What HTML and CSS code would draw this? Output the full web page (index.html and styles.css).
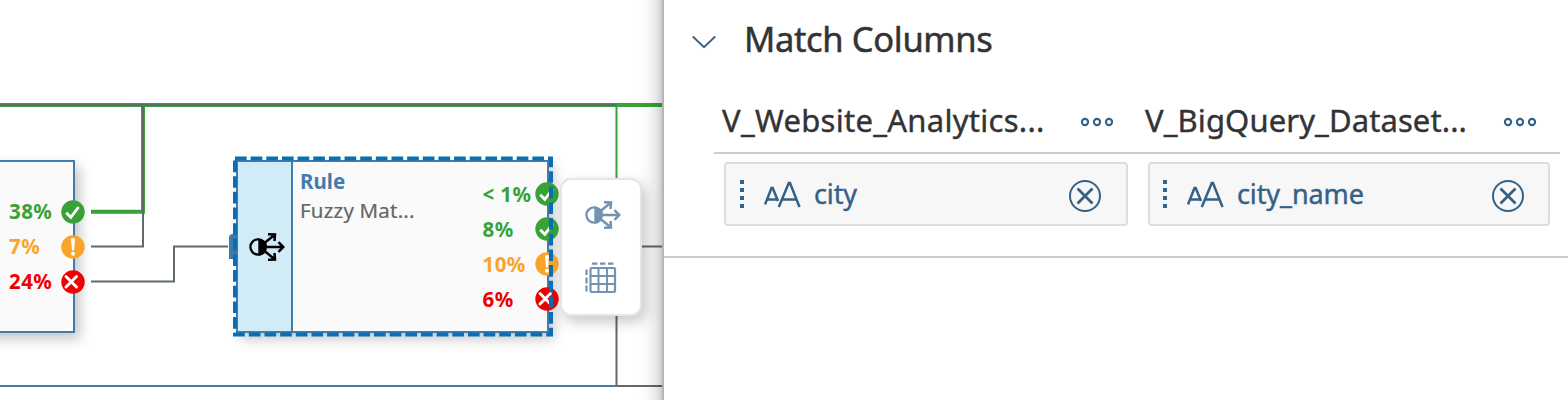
FILE: index.html
```html
<!DOCTYPE html>
<html lang="en">
<head>
<meta charset="utf-8">
<title>Match Columns</title>
<link rel="stylesheet" href="styles.css">
</head>
<body>
<svg class="defs" width="0" height="0" aria-hidden="true">
  <symbol id="ok" viewBox="0 0 24 24"><circle cx="12" cy="12" r="11.7" fill="#38a238"/><path d="M5.2 12.8 9.8 17.3 17.6 7" fill="none" stroke="#fff" stroke-width="2.8"/></symbol>
  <symbol id="warn" viewBox="0 0 24 24"><circle cx="12" cy="12" r="11.7" fill="#faa42b"/><path d="M10 4.2Q10 3 12 3t2 1.2L13 15.6h-2z" fill="#fff"/><circle cx="12" cy="18.7" r="2" fill="#fff"/></symbol>
  <symbol id="err" viewBox="0 0 24 24"><circle cx="12" cy="12" r="11.7" fill="#ee0000"/><path d="M5 6.500 15.500 17M15.500 6.500 5 17" fill="none" stroke="#fff" stroke-width="2.900" stroke-linecap="round"/></symbol>
  <symbol id="match" viewBox="0 0 36 30"><circle cx="9" cy="15" r="7.600" fill="none" stroke="currentColor" stroke-width="2.300"/><path d="M9.300 6.300a8.700 8.700 0 0 1 0 17.400z" fill="currentColor"/><path d="M16 15H34M29.500 10.200 34.300 15l-4.800 4.800M15.500 11 26 2.500M19 2.300 26 2.500 25.500 9M15.500 19 26 27.500M19 27.700 26 27.500 25.500 21" fill="none" stroke="currentColor" stroke-width="2.500"/></symbol>
  <symbol id="grid" viewBox="0 0 32 32"><rect x="5.500" y="6" width="24.500" height="24" rx="1.200" fill="none" stroke="currentColor" stroke-width="2.200"/><path d="M13.500 6v24M22 6v24M6 14h24M6 22h24" stroke="currentColor" stroke-width="2"/><path d="M7 1.700h5.500M15 1.700h5.500M23 1.700h5.500M1.500 7.500v5.500M1.500 15.500v6M1.500 23.500v6" stroke="currentColor" stroke-width="2.200"/></symbol>
  <symbol id="close" viewBox="0 0 32 32"><circle cx="16" cy="16" r="15" fill="none" stroke="currentColor" stroke-width="2"/><path d="M8.500 8.500 23.500 23.500M23.500 8.500 8.500 23.500" stroke="currentColor" stroke-width="2.800"/></symbol>
  <symbol id="more" viewBox="0 0 34 10"><g fill="none" stroke="currentColor" stroke-width="2.100"><circle cx="5" cy="5" r="3.100"/><circle cx="17" cy="5" r="3.100"/><circle cx="29" cy="5" r="3.100"/></g></symbol>
  <symbol id="text" viewBox="0 0 37 27"><g fill="none" stroke="currentColor" stroke-width="2.500"><path d="M1 23.500 7.500 7h1.200L14 20M4 18.500h9"/><path d="M14.800 26 24.800 2h1.200L35.500 26M18.500 18.500h14"/></g></symbol>
  <symbol id="grip" viewBox="0 0 4 28"><path d="M0 0h4v4H0zM0 8h4v4H0zM0 16h4v4H0zM0 24h4v4H0z" fill="currentColor"/></symbol>
</svg>
<div class="app">
  <section class="canvas">
    <svg class="wires" width="664" height="400">
      <g fill="none" stroke-width="2">
        <path class="blue" d="M0 386H616"/>
        <path class="green thick" d="M0 105H662M91 211.700H143V105"/>
        <path class="grey" d="M0 105H616M91 246.500H143V105M91 281.500H174V246.500H228"/>
        <path class="green" d="M616.500 107V180"/>
        <path class="grey" d="M616.500 310V386H662M636 246.500H662"/>
      </g>
    </svg>
    <div class="node node-left">
      <ul class="ports">
        <li class="ok"><span>38%</span><svg><use href="#ok"/></svg></li>
        <li class="warn"><span>7%</span><svg><use href="#warn"/></svg></li>
        <li class="err"><span>24%</span><svg><use href="#err"/></svg></li>
      </ul>
    </div>
    <div class="inport"></div>
    <div class="node node-rule">
      <div class="strip"><svg class="match"><use href="#match"/></svg></div>
      <div class="info"><div class="kind">Rule</div><div class="name">Fuzzy Mat...</div></div>
      <ul class="ports">
        <li class="ok"><span>&lt; 1%</span><svg><use href="#ok"/></svg></li>
        <li class="ok"><span>8%</span><svg><use href="#ok"/></svg></li>
        <li class="warn"><span>10%</span><svg><use href="#warn"/></svg></li>
        <li class="err"><span>6%</span><svg><use href="#err"/></svg></li>
      </ul>
    </div>
    <svg class="selection" width="322" height="184"><rect x="4" y="4.500" width="316" height="176" fill="none" stroke="#0a6eb4" stroke-width="4" stroke-dasharray="11.650 4"/></svg>
    <div class="toolbox"><svg class="match"><use href="#match"/></svg><svg class="grid"><use href="#grid"/></svg></div>
  </section>
  <section class="panel">
    <header class="title">
      <svg class="chevron" viewBox="0 0 24 14"><path d="M.8 1.500 12 12.200 23.200 1.500" fill="none" stroke="currentColor" stroke-width="1.900"/></svg>
      <h1>Match Columns</h1>
    </header>
    <div class="heads">
      <div class="head"><span class="h-one">V_Website_Analytics...</span><svg class="more"><use href="#more"/></svg></div>
      <div class="head"><span class="h-two">V_BigQuery_Dataset...</span><svg class="more"><use href="#more"/></svg></div>
    </div>
    <div class="chips">
      <div class="chip"><svg class="grip"><use href="#grip"/></svg><svg class="type"><use href="#text"/></svg><span>city</span><svg class="close"><use href="#close"/></svg></div>
      <div class="chip"><svg class="grip"><use href="#grip"/></svg><svg class="type"><use href="#text"/></svg><span>city_name</span><svg class="close"><use href="#close"/></svg></div>
    </div>
  </section>
</div>
</body>
</html>
```
FILE: styles.css
```css
* { box-sizing: border-box; }
body { margin: 0; background: #fff; font-family: "Noto Sans", sans-serif; }
.defs { position: absolute; }
svg { display: block; flex: none; }
.app { display: grid; grid-template-columns: 664px 1fr; height: 400px; overflow: hidden; }
.canvas { position: relative; overflow: hidden; }
.canvas::after {
  content: ""; position: absolute; top: 0; right: 0; width: 24px; height: 400px;
  border-right: 2px solid #b6b6b6;
  background: linear-gradient(to right, rgba(0,0,0,0), rgba(0,0,0,.025) 40%, rgba(0,0,0,.09) 75%, rgba(0,0,0,.2));
}
.wires { position: absolute; left: 0; top: 0; }
.green { stroke: #38a238; }
.thick { stroke-width: 4px; }
.grey { stroke: #5f696e; }
.blue { stroke: #427cac; }
.node { position: absolute; background: #fafafa; border: 2px solid #427cac; box-shadow: 5px 6px 12px rgba(0,0,0,.23); }
.node-left { left: -20px; top: 160px; width: 95px; height: 173px; padding: 32px 0 0 27px; }
.node-rule { left: 236px; top: 160px; width: 313px; height: 173px; display: flex; }
.inport { position: absolute; left: 229px; top: 234px; width: 8px; height: 25px; background: #427cac; border-radius: 4px 0 0 0; }
.ports { list-style: none; margin: 0; padding: 0; }
.ports li { display: flex; align-items: center; justify-content: space-between; height: 35px; font: bold 20.5px/35px "Noto Sans", sans-serif; letter-spacing: .4px; white-space: nowrap; }
.ports span { width: 52px; }
.ports svg { width: 24px; height: 24px; }
.node-left .ports { width: 76px; }
.node-rule .ports { width: 76px; margin: 14.500px 0 0 26px; flex: none; }
.ports .ok { color: #38a238; }
.ports .warn { color: #faa42b; }
.ports .err { color: #ee0000; }
.strip { width: 55px; flex: none; background: #d1ebf7; border-right: 2px solid #427cac; display: flex; align-items: center; padding-left: 11px; }
.match { width: 36px; height: 30px; }
.info { width: 163.500px; flex: none; padding: 5px 0 0 7px; white-space: nowrap; }
.kind { font: bold 20.5px/29px "Noto Sans", sans-serif; color: #427cac; }
.name { font-size: 20.5px; line-height: 29px; color: #666; letter-spacing: .2px; -webkit-text-stroke: .2px #666; }
.selection { position: absolute; left: 231px; top: 154px; }
.toolbox {
  position: absolute; left: 560px; top: 178px; width: 82px; height: 138px;
  background: #fff; border: 2px solid #e6e6e6; border-radius: 11px; box-shadow: 4px 6px 14px rgba(0,0,0,.22);
  display: flex; flex-direction: column; gap: 32px; padding: 20px 0 0 22.500px; color: #7393b0;
}
.grid { width: 32px; height: 32px; }
.panel { color: #346187; height: 258px; border-bottom: 2px solid #ccc; }
.title { display: flex; align-items: center; height: 80px; padding-left: 28px; gap: 28px; }
.chevron { width: 24px; height: 14px; margin-top: 4px; }
h1 { margin: -2px 0 0; font-size: 34.5px; font-weight: 400; line-height: 48px; letter-spacing: -.35px; color: #333; white-space: nowrap; -webkit-text-stroke: .5px #333; }
.heads { display: grid; grid-template-columns: 423px 1fr; margin: 0 8px 0 50px; height: 74px; border-bottom: 2px solid #ccc; }
.head { display: flex; align-items: center; justify-content: space-between; padding: 10px 23px 0 8px; }
.head span { font-size: 31px; line-height: 44px; margin-top: -2px; color: #333; white-space: nowrap; -webkit-text-stroke: .4px #333; }
.h-one { letter-spacing: .28px; }
.h-two { letter-spacing: .1px; }
.more { width: 34px; height: 10px; margin-top: 2px; }
.chips { display: grid; grid-template-columns: 404px 402px; gap: 20px; padding: 8px 0 0 60px; }
.chip { display: flex; align-items: center; height: 64px; background: #f7f7f7; border: 2px solid #ddd; border-radius: 4px; padding: 0 25px 0 14px; }
.chip + .chip { padding: 0 24px 0 13px; }
.grip { width: 4px; height: 28px; }
.type { width: 37px; height: 27px; margin-left: 20px; }
.chip span { font-size: 27px; line-height: 40px; margin-left: 13px; letter-spacing: -.1px; -webkit-text-stroke: .4px #346187; }
.close { width: 32px; height: 32px; margin-left: auto; margin-top: 3px; }
```
